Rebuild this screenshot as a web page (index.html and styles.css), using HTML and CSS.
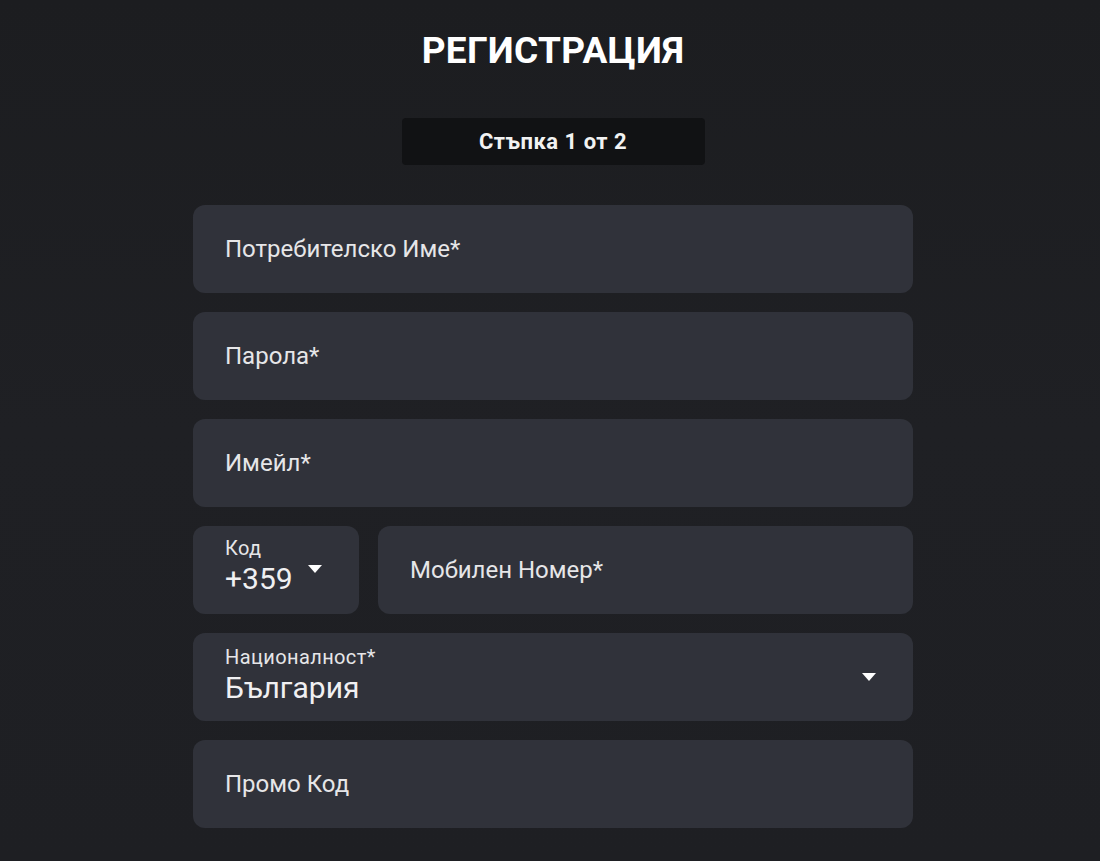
FILE: index.html
```html
<!DOCTYPE html>
<html lang="bg">
<head>
<meta charset="utf-8">
<link rel="stylesheet" href="styles.css">
</head>
<body>
<main class="page">
  <h1 class="title">РЕГИСТРАЦИЯ</h1>
  <div class="step">Стъпка 1 от 2</div>
  <form class="form">
    <div class="field"><span class="ph">Потребителско Име*</span></div>
    <div class="field"><span class="ph">Парола*</span></div>
    <div class="field"><span class="ph">Имейл*</span></div>
    <div class="row">
      <div class="field code">
        <div class="sel">
          <span class="lbl">Код</span>
          <span class="val">+359</span>
        </div>
        <span class="caret caret-code"></span>
      </div>
      <div class="field mobile"><span class="ph">Мобилен Номер*</span></div>
    </div>
    <div class="field nat">
      <div class="sel sel-nat">
        <span class="lbl">Националност*</span>
        <span class="val">България</span>
      </div>
      <span class="caret"></span>
    </div>
    <div class="field"><span class="ph">Промо Код</span></div>
  </form>
</main>
</body>
</html>
```
FILE: styles.css
```css
html, body {
  margin: 0;
  padding: 0;
}
body {
  background: linear-gradient(180deg, #1c1d20 0%, #1f2024 50%, #1e1f23 100%);
  min-height: 861px;
  font-family: Roboto, "Noto Sans", "Liberation Sans", sans-serif;
  color: #e8e8ea;
}
.page {
  width: 720px;
  margin: 0 auto;
  padding-left: 6px;
  display: flex;
  flex-direction: column;
  align-items: center;
}
.title {
  margin: 26px 0 0;
  font-size: 37px;
  font-weight: 700;
  line-height: 50px;
  color: #ffffff;
  letter-spacing: 0.3px;
}
.step {
  margin-top: 42px;
  width: 303px;
  height: 47px;
  background: #111214;
  border-radius: 4px;
  display: flex;
  align-items: center;
  justify-content: center;
  font-size: 22px;
  font-weight: 700;
  letter-spacing: 0.5px;
  color: #f2f2f2;
}
.form {
  margin-top: 40px;
  width: 720px;
  display: flex;
  flex-direction: column;
  gap: 19px;
}
.field {
  height: 88px;
  background: #30323a;
  border-radius: 12px;
  display: flex;
  align-items: center;
  padding: 0 32px;
  box-sizing: border-box;
  position: relative;
}
.ph {
  font-size: 24px;
  color: #e6e6e8;
}
.row {
  display: flex;
  gap: 19px;
}
.code {
  width: 166px;
  flex: none;
  padding-right: 36px;
}
.mobile {
  flex: 1;
}
.sel {
  display: flex;
  flex-direction: column;
  flex: 1;
  gap: 4px;
  padding-bottom: 8px;
}
.sel-nat {
  padding-bottom: 4px;
}
.lbl {
  font-size: 20px;
  line-height: 22px;
  letter-spacing: 0.4px;
  color: #e6e6e8;
}
.val {
  font-size: 30px;
  line-height: 32px;
  color: #f0f0f2;
}
.caret {
  width: 0;
  height: 0;
  border-left: 7px solid transparent;
  border-right: 7px solid transparent;
  border-top: 8px solid #ffffff;
  margin-right: 5px;
}
.caret-code {
  position: absolute;
  left: 115px;
  top: 39px;
  margin: 0;
}
```
